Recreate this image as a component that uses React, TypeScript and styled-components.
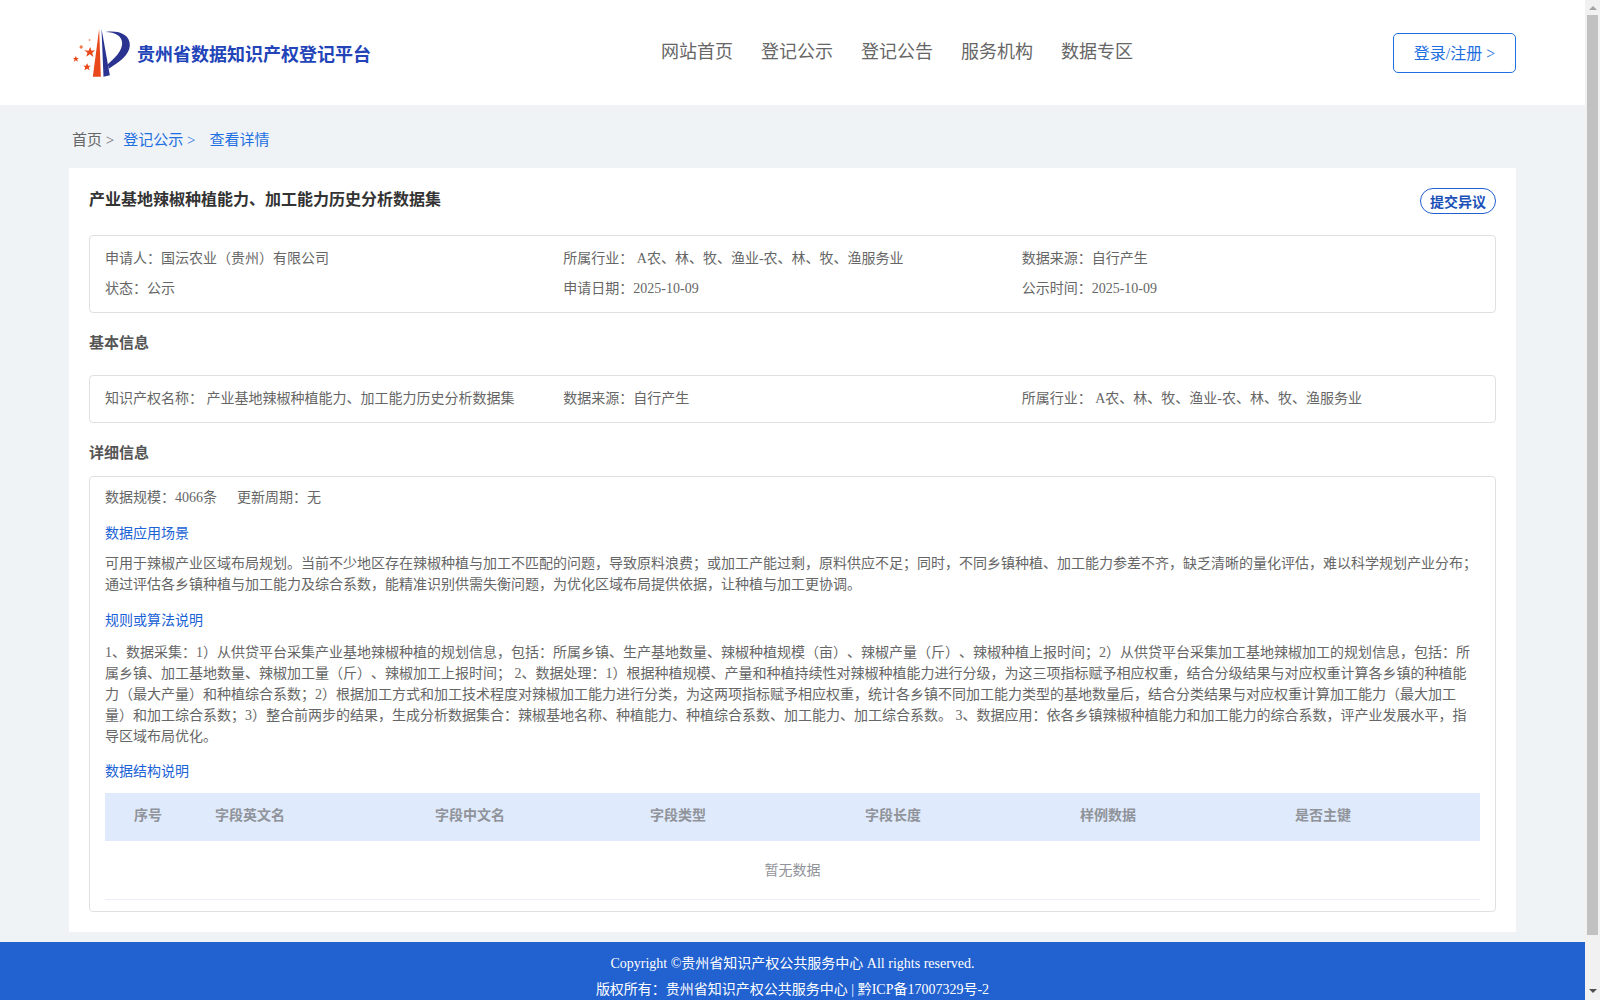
import React from "react";
import styled, { createGlobalStyle } from "styled-components";

const GlobalStyle = createGlobalStyle`
    html,body{
        height:100%;
        overflow:hidden;
    }
    body{
        margin:0;
        background:#eff3f6;
        font-family:"Liberation Serif","Noto Sans CJK SC",serif;
        font-size:14px;
        color:#666;
        text-spacing-trim:space-all;
    }
`;

const applicantRows = [
    ["申请人：国沄农业（贵州）有限公司", "所属行业： A农、林、牧、渔业-农、林、牧、渔服务业", "数据来源：自行产生"],
    ["状态：公示", "申请日期：2025-10-09", "公示时间：2025-10-09"],
];

const columns = ["字段英文名", "字段中文名", "字段类型", "字段长度", "样例数据", "是否主键"];

const Logo = () => (
    <svg width="59" height="50" viewBox="36 26 176 150" aria-hidden="true">
        <path d="M117 28L98 172L122 172Z" fill="#e8481a" />
        <path d="M124 28L149 168L130 172Z" fill="#2b3390" />
        <path
            d="M136 38C175 32 210 45 209 78C208 108 175 130 146 148L143 135C165 115 186 95 186 72C186 50 165 38 136 38Z"
            fill="#2b3390"
        />
        <polygon points="90,83 94,94 105,93 96,101 100,113 89,105 78,112 82,100 72,93 85,94" fill="#e8481a" />
        <polygon points="47,110 50,116 56,116 51,120 53,127 47,123 41,127 43,120 38,116 44,116" fill="#e8481a" />
        <polygon points="81,132 84,139 92,139 86,144 88,153 81,148 73,153 75,144 69,139 77,139" fill="#e8481a" />
        <circle cx="63" cy="83" r="5" fill="#ee7a50" />
        <circle cx="88" cy="62" r="3" fill="#f2a080" />
    </svg>
);

const App = () => {
    return (
        <>
            <GlobalStyle />
            <Shell>
                <Page>
                    <Header>
                        <Inner>
                            <Brand>
                                <Logo />
                                <span>贵州省数据知识产权登记平台</span>
                            </Brand>
                            <Nav>
                                <a>网站首页</a>
                                <a>登记公示</a>
                                <a>登记公告</a>
                                <a>服务机构</a>
                                <a>数据专区</a>
                            </Nav>
                            <LoginButton>登录/注册 &gt;</LoginButton>
                        </Inner>
                    </Header>
                    <Main>
                        <Breadcrumb>
                            <span>首页 &gt;</span>
                            <span className="link">登记公示 &gt;</span>
                            <span className="link">查看详情</span>
                        </Breadcrumb>
                        <Card>
                            <TitleRow>
                                <h1>产业基地辣椒种植能力、加工能力历史分析数据集</h1>
                                <ObjectionButton>提交异议</ObjectionButton>
                            </TitleRow>
                            <InfoBox>
                                {applicantRows.map((row) => (
                                    <InfoRow key={row[0]}>
                                        {row.map((item) => (
                                            <span key={item}>{item}</span>
                                        ))}
                                    </InfoRow>
                                ))}
                            </InfoBox>
                            <SectionTitle>基本信息</SectionTitle>
                            <BasicBox>
                                <InfoRow>
                                    <span>知识产权名称： 产业基地辣椒种植能力、加工能力历史分析数据集</span>
                                    <span>数据来源：自行产生</span>
                                    <span>所属行业： A农、林、牧、渔业-农、林、牧、渔服务业</span>
                                </InfoRow>
                            </BasicBox>
                            <DetailTitle>详细信息</DetailTitle>
                            <DetailBox>
                                <Meta>
                                    <span>数据规模：4066条</span>
                                    <span>更新周期：无</span>
                                </Meta>
                                <BlueTitle $gap={9} $top={14}>数据应用场景</BlueTitle>
                                <Paragraph>
                                    可用于辣椒产业区域布局规划。当前不少地区存在辣椒种植与加工不匹配的问题，导致原料浪费；或加工产能过剩，原料供应不足；同时，不同乡镇种植、加工能力参差不齐，缺乏清晰的量化评估，难以科学规划产业分布；通过评估各乡镇种植与加工能力及综合系数，能精准识别供需失衡问题，为优化区域布局提供依据，让种植与加工更协调。
                                </Paragraph>
                                <BlueTitle $gap={11} $top={16}>规则或算法说明</BlueTitle>
                                <Paragraph>
                                    1、数据采集：1）从供贷平台采集产业基地辣椒种植的规划信息，包括：所属乡镇、生产基地数量、辣椒种植规模（亩）、辣椒产量（斤）、辣椒种植上报时间；2）从供贷平台采集加工基地辣椒加工的规划信息，包括：所属乡镇、加工基地数量、辣椒加工量（斤）、辣椒加工上报时间； 2、数据处理：1）根据种植规模、产量和种植持续性对辣椒种植能力进行分级，为这三项指标赋予相应权重，结合分级结果与对应权重计算各乡镇的种植能力（最大产量）和种植综合系数；2）根据加工方式和加工技术程度对辣椒加工能力进行分类，为这两项指标赋予相应权重，统计各乡镇不同加工能力类型的基地数量后，结合分类结果与对应权重计算加工能力（最大加工量）和加工综合系数；3）整合前两步的结果，生成分析数据集合：辣椒基地名称、种植能力、种植综合系数、加工能力、加工综合系数。 3、数据应用：依各乡镇辣椒种植能力和加工能力的综合系数，评产业发展水平，指导区域布局优化。
                                </Paragraph>
                                <BlueTitle $gap={10} $top={15}>数据结构说明</BlueTitle>
                                <Table>
                                    <thead>
                                        <tr>
                                            <th>序号</th>
                                            {columns.map((name) => (
                                                <th key={name}>{name}</th>
                                            ))}
                                        </tr>
                                    </thead>
                                    <tbody>
                                        <tr>
                                            <td colSpan={7}>暂无数据</td>
                                        </tr>
                                    </tbody>
                                </Table>
                            </DetailBox>
                        </Card>
                    </Main>
                    <Footer>
                        <p>Copyright ©贵州省知识产权公共服务中心 All rights reserved.</p>
                        <p>版权所有：贵州省知识产权公共服务中心 | 黔ICP备17007329号-2</p>
                    </Footer>
                </Page>
                <ScrollBar>
                    <ArrowUp />
                    <Thumb />
                    <ArrowDown />
                </ScrollBar>
            </Shell>
        </>
    );
};

const Shell = styled.div`
    display:flex;
    height:100vh;
    overflow:hidden;
`;

const Page = styled.div`
    flex:1;
    min-width:0;
    display:flex;
    flex-direction:column;
`;

const ScrollBar = styled.aside`
    width:15px;
    flex-shrink:0;
    background:#f1f1f1;
    display:flex;
    flex-direction:column;
    align-items:center;
`;

const ArrowUp = styled.div`
    margin:6px 0 5px;
    width:0;
    height:0;
    border-left:4px solid transparent;
    border-right:4px solid transparent;
    border-bottom:4px solid #a3a3a3;
`;

const ArrowDown = styled.div`
    margin:54px 0 0;
    width:0;
    height:0;
    border-left:4px solid transparent;
    border-right:4px solid transparent;
    border-top:4px solid #505050;
`;

const Thumb = styled.div`
    width:11px;
    height:920px;
    background:#c1c1c1;
`;

const Header = styled.header`
    background:#fff;
    height:105px;
    flex-shrink:0;
`;

const Inner = styled.div`
    width:1447px;
    height:100%;
    margin:0 auto;
    display:flex;
    align-items:center;
`;

const Brand = styled.div`
    display:flex;
    align-items:center;
    gap:6px;
    padding-left:3px;
    font-size:18px;
    font-weight:bold;
    color:#2244b8;
    width:292px;
    box-sizing:border-box;
    flex-shrink:0;
    white-space:nowrap;
    svg{
        flex-shrink:0;
    }
`;

const Nav = styled.nav`
    display:flex;
    gap:28px;
    margin-left:300px;
    padding-bottom:6px;
    font-size:18px;
    color:#666;
`;

const LoginButton = styled.button`
    margin-left:auto;
    width:123px;
    height:40px;
    padding:0 0 2px;
    background:#fff;
    border:1px solid #1e6fe0;
    border-radius:5px;
    font:inherit;
    font-size:16px;
    color:#1e6fe0;
`;

const Main = styled.main`
    width:1447px;
    margin:0 auto 10px;
    flex-shrink:0;
`;

const Breadcrumb = styled.div`
    display:flex;
    height:63px;
    align-items:center;
    padding:4px 0 0 3px;
    box-sizing:border-box;
    font-size:15px;
    color:#666;
    gap:9px;
    .link{
        color:#1e6fe0;
    }
    .link:last-child{
        margin-left:5px;
    }
`;

const Card = styled.section`
    background:#fff;
    padding:20px;
`;

const TitleRow = styled.div`
    display:flex;
    justify-content:space-between;
    align-items:flex-start;
    height:47px;
    h1{
        margin:0;
        font-size:16px;
        line-height:24px;
        color:#333;
    }
`;

const ObjectionButton = styled.button`
    width:76px;
    height:26px;
    border:1px solid #2060d0;
    border-radius:13px;
    background:#fff;
    font:inherit;
    font-weight:bold;
    font-size:14px;
    color:#1a50b8;
    padding:0;
`;

const InfoBox = styled.div`
    border:1px solid #e0e0e0;
    border-radius:4px;
    padding:8px 15px;
`;

const InfoRow = styled.div`
    display:grid;
    grid-template-columns:repeat(3,1fr);
    line-height:30px;
`;

const SectionTitle = styled.h2`
    margin:0;
    font-size:15px;
    font-weight:bold;
    color:#555;
    line-height:20px;
    padding:20px 0 22px;
`;

const DetailTitle = styled(SectionTitle)`
    padding:20px 0 13px;
`;

const BasicBox = styled(InfoBox)`
    padding:8px 15px;
`;

const DetailBox = styled(InfoBox)`
    padding:9px 15px 11px;
`;

const Meta = styled.div`
    display:flex;
    gap:20px;
    line-height:24px;
`;

const BlueTitle = styled.div<{ $gap: number; $top: number }>`
    color:#1a62d6;
    line-height:20px;
    margin:${(p) => p.$top}px 0 ${(p) => p.$gap}px;
`;

const Paragraph = styled.p`
    margin:0;
    line-height:21px;
    color:#666;
`;

const Table = styled.table`
    width:100%;
    border-collapse:collapse;
    table-layout:fixed;
    margin-top:11px;
    th{
        background:#dfebfd;
        color:#909399;
        font-size:14px;
        font-weight:bold;
        text-align:left;
        height:48px;
        padding:0 0 7px 10px;
        width:215px;
        box-sizing:border-box;
    }
    th:first-child{
        width:100px;
        padding-left:29px;
    }
    th:nth-child(2){
        width:220px;
    }
    th:last-child{
        width:auto;
    }
    td{
        text-align:center;
        color:#909399;
        height:58px;
        padding:0 0 2px;
        box-sizing:border-box;
        border-bottom:1px solid #ebeef5;
    }
`;

const Footer = styled.footer`
    background:#2161d0;
    color:#fff;
    flex:1;
    padding-top:9px;
    text-align:center;
    p{
        margin:0;
        line-height:26px;
    }
`;

export default App;
